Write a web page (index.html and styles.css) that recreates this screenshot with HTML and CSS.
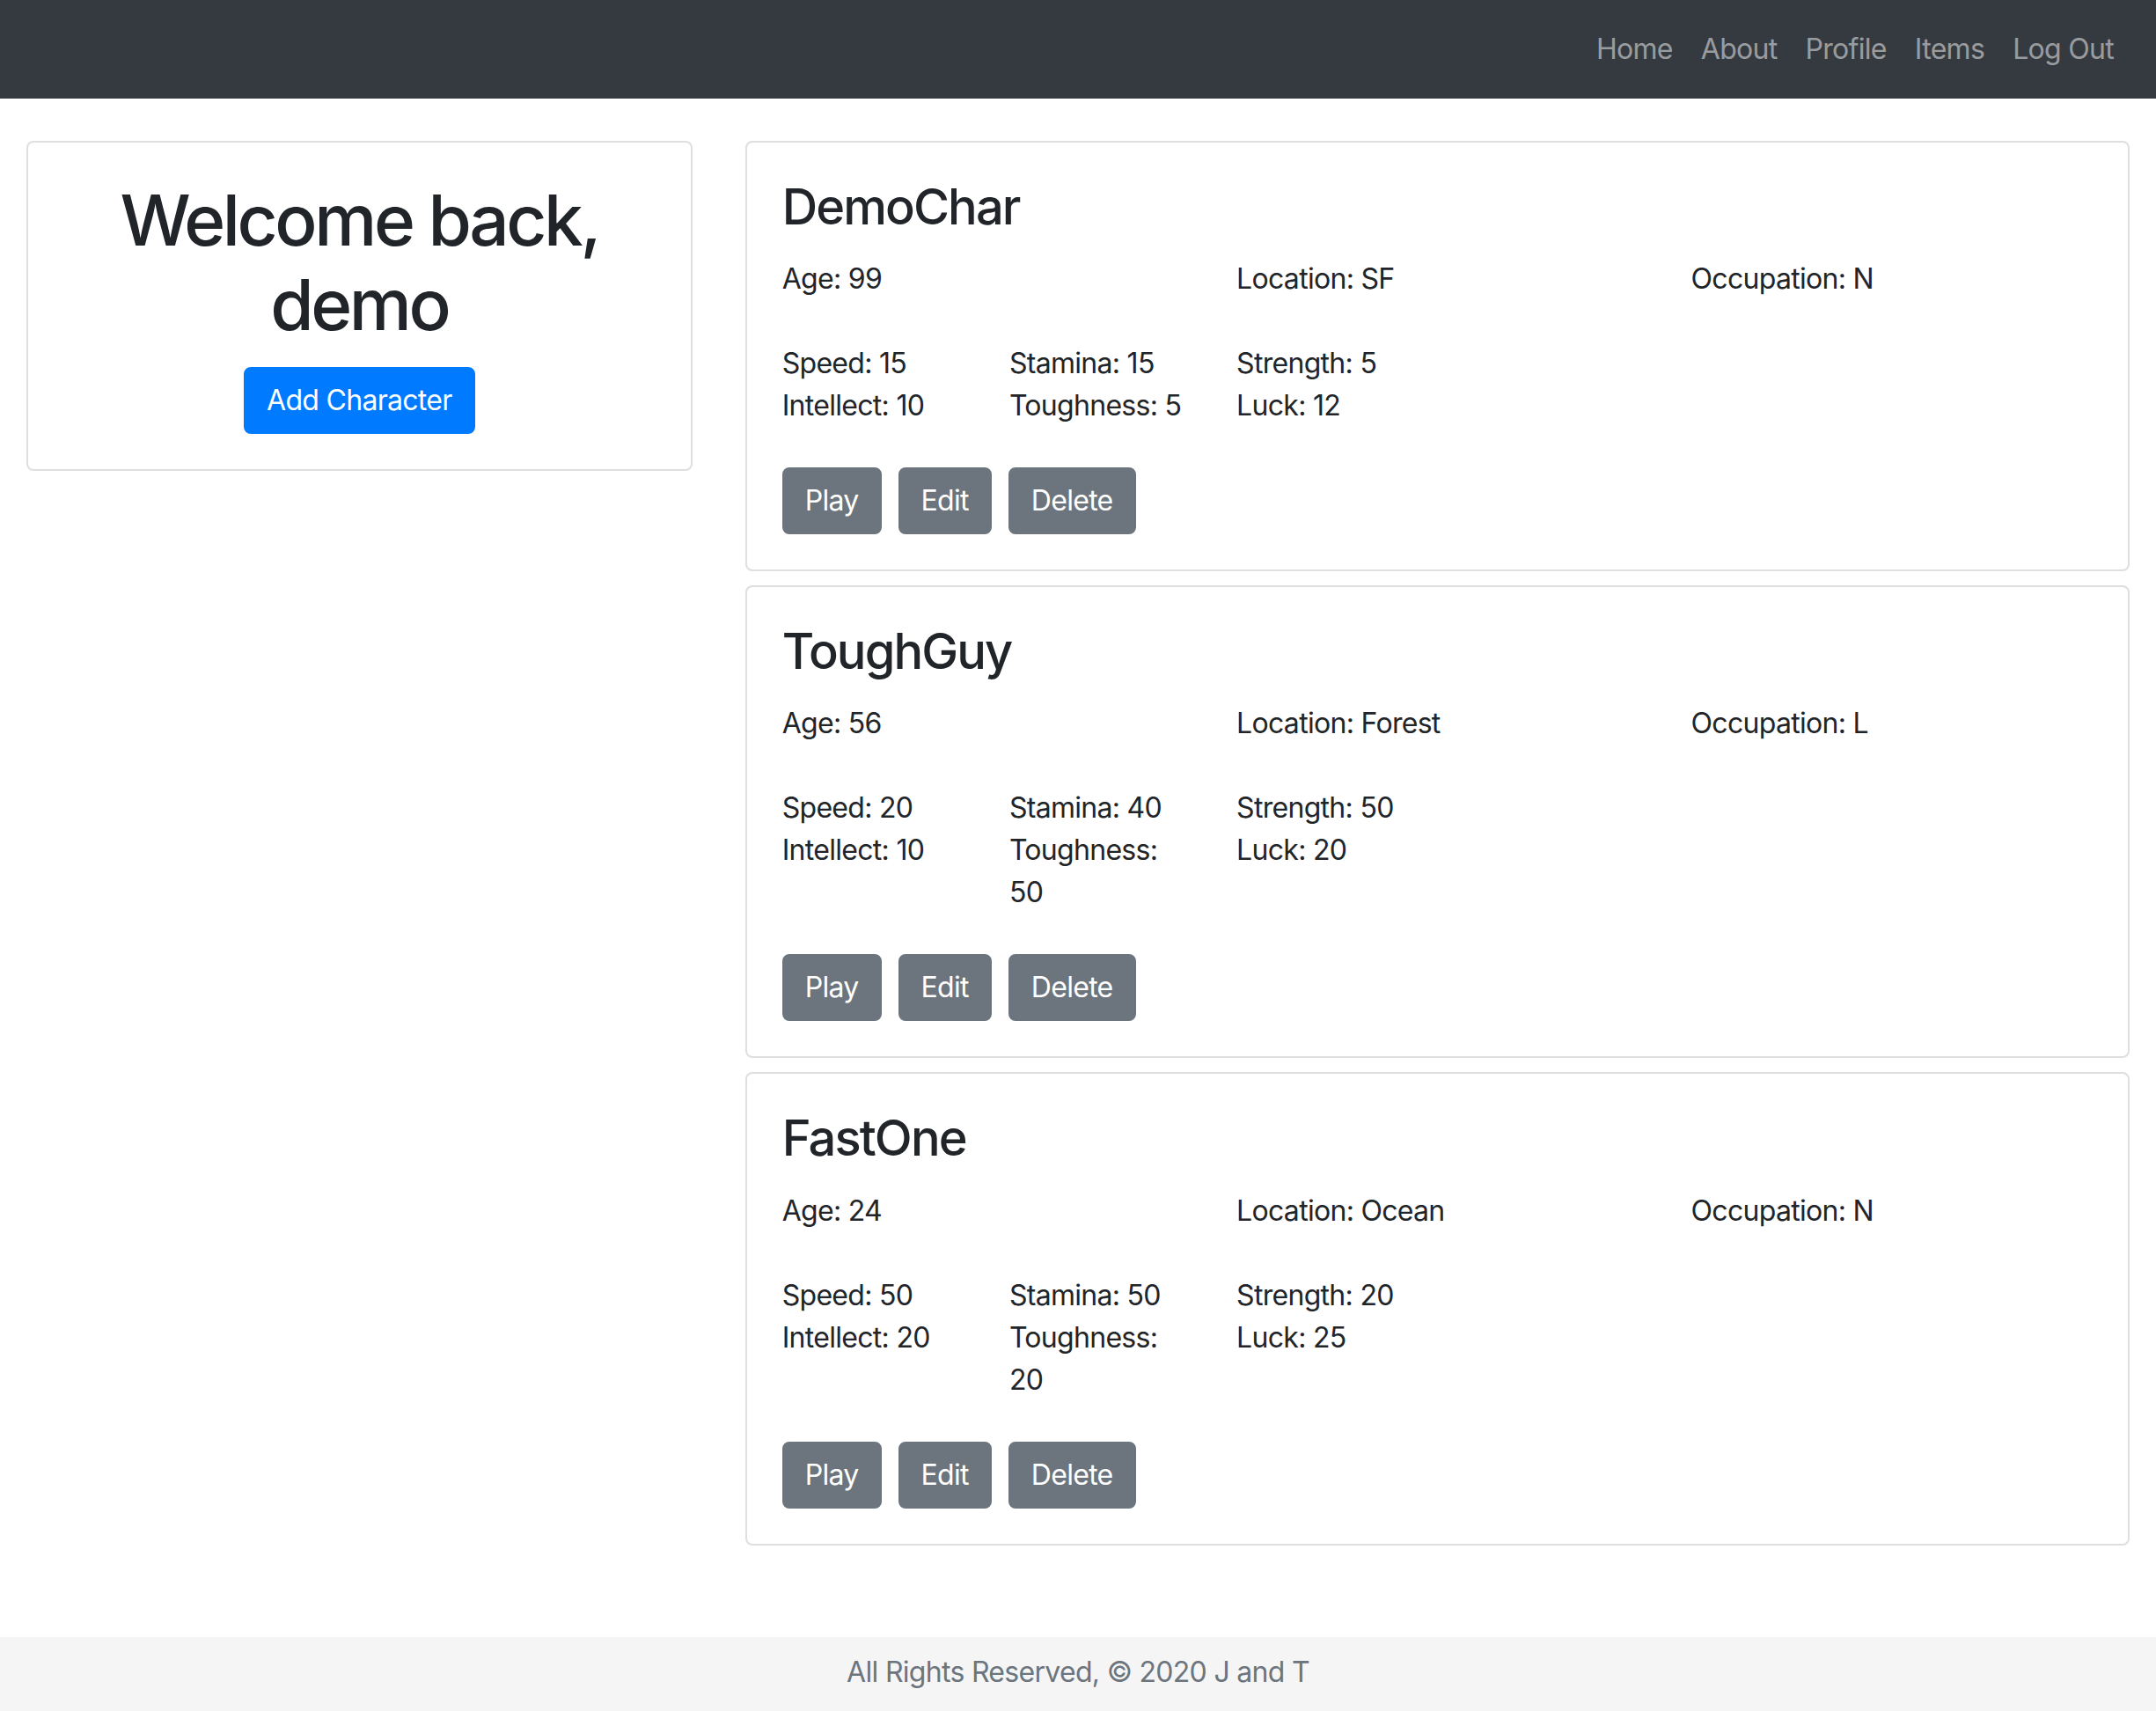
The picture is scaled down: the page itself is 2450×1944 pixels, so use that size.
FILE: index.html
```html
<!DOCTYPE html>
<html lang="en">
<head>
<meta charset="utf-8">
<title>Characters</title>
<link rel="stylesheet" href="styles.css">
</head>
<body>
<nav class="navbar">
  <ul class="nav-links">
    <li><a class="nav-link" href="#">Home</a></li>
    <li><a class="nav-link" href="#">About</a></li>
    <li><a class="nav-link" href="#">Profile</a></li>
    <li><a class="nav-link" href="#">Items</a></li>
    <li><a class="nav-link" href="#">Log Out</a></li>
  </ul>
</nav>

<main class="page">
  <div class="row">
    <aside class="col-side">
      <div class="card welcome-card">
        <h1 class="welcome-title">Welcome back, demo</h1>
        <button class="btn btn-primary">Add Character</button>
      </div>
    </aside>

    <section class="col-main">
      <div class="card char-card">
        <h3 class="char-name">DemoChar</h3>
        <div class="info-row">
          <div class="info-col">Age: 99</div>
          <div class="info-col">Location: SF</div>
          <div class="info-col">Occupation: N</div>
        </div>
        <div class="stats-row">
          <div class="stat-col"><div>Speed: 15</div><div>Intellect: 10</div></div>
          <div class="stat-col"><div>Stamina: 15</div><div>Toughness: 5</div></div>
          <div class="stat-col"><div>Strength: 5</div><div>Luck: 12</div></div>
        </div>
        <div class="actions">
          <button class="btn btn-secondary">Play</button>
          <button class="btn btn-secondary">Edit</button>
          <button class="btn btn-secondary">Delete</button>
        </div>
      </div>

      <div class="card char-card">
        <h3 class="char-name">ToughGuy</h3>
        <div class="info-row">
          <div class="info-col">Age: 56</div>
          <div class="info-col">Location: Forest</div>
          <div class="info-col">Occupation: L</div>
        </div>
        <div class="stats-row">
          <div class="stat-col"><div>Speed: 20</div><div>Intellect: 10</div></div>
          <div class="stat-col"><div>Stamina: 40</div><div>Toughness: 50</div></div>
          <div class="stat-col"><div>Strength: 50</div><div>Luck: 20</div></div>
        </div>
        <div class="actions">
          <button class="btn btn-secondary">Play</button>
          <button class="btn btn-secondary">Edit</button>
          <button class="btn btn-secondary">Delete</button>
        </div>
      </div>

      <div class="card char-card">
        <h3 class="char-name">FastOne</h3>
        <div class="info-row">
          <div class="info-col">Age: 24</div>
          <div class="info-col">Location: Ocean</div>
          <div class="info-col">Occupation: N</div>
        </div>
        <div class="stats-row">
          <div class="stat-col"><div>Speed: 50</div><div>Intellect: 20</div></div>
          <div class="stat-col"><div>Stamina: 50</div><div>Toughness: 20</div></div>
          <div class="stat-col"><div>Strength: 20</div><div>Luck: 25</div></div>
        </div>
        <div class="actions">
          <button class="btn btn-secondary">Play</button>
          <button class="btn btn-secondary">Edit</button>
          <button class="btn btn-secondary">Delete</button>
        </div>
      </div>
    </section>
  </div>
</main>

<footer class="footer">All Rights Reserved, &copy; 2020 J and T</footer>
</body>
</html>
```

FILE: styles.css
```css
* {
  box-sizing: border-box;
}

html, body {
  margin: 0;
  padding: 0;
}

body {
  font-family: Inter, "Noto Sans", "Liberation Sans", sans-serif;
  font-size: 32px;
  line-height: 48px;
  letter-spacing: -0.7px;
  color: #212529;
  background: #fff;
  min-height: 100vh;
  display: flex;
  flex-direction: column;
}

/* Navbar */
.navbar {
  background: #343a40;
  padding: 16px 32px;
  display: flex;
  justify-content: flex-end;
}

.nav-links {
  list-style: none;
  margin: 0;
  padding: 0;
  display: flex;
}

.nav-link {
  display: block;
  padding: 16px;
  color: rgba(255, 255, 255, 0.5);
  text-decoration: none;
}

/* Page layout */
.page {
  padding: 48px 30px 0;
}

.row {
  display: flex;
  margin: 0 -30px;
  align-items: flex-start;
}

.col-side {
  width: 33.3333%;
  padding: 0 30px;
}

.col-main {
  width: 66.6667%;
  padding: 0 30px;
}

/* Cards */
.card {
  border: 2px solid rgba(0, 0, 0, 0.125);
  border-radius: 8px;
  padding: 40px;
  background: #fff;
}

.welcome-card {
  text-align: center;
}

.welcome-title {
  font-size: 80px;
  line-height: 1.2;
  font-weight: 500;
  letter-spacing: -3.4px;
  margin: 0 0 23px;
}

.char-card {
  margin-bottom: 16px;
}

.char-name {
  font-size: 56px;
  line-height: 1.2;
  font-weight: 500;
  letter-spacing: -1.9px;
  margin: 0 0 24px;
}

.info-row {
  display: flex;
  margin: 0 -30px 48px;
}

.info-col {
  width: 33.3333%;
  padding: 0 30px;
}

.stats-row {
  display: flex;
  margin: 0 -30px 46px;
}

.stat-col {
  width: 16.6667%;
  padding: 0 30px;
}

/* Buttons */
.actions {
  display: flex;
  gap: 19px;
}

.btn {
  display: inline-block;
  font-family: inherit;
  font-size: 32px;
  line-height: 48px;
  font-weight: 400;
  letter-spacing: -0.7px;
  padding: 12px 24px;
  border: 2px solid transparent;
  border-radius: 8px;
  color: #fff;
  cursor: pointer;
}

.btn-primary {
  background: #007bff;
  border-color: #007bff;
}

.btn-secondary {
  background: #6c757d;
  border-color: #6c757d;
}

/* Footer */
.footer {
  margin-top: auto;
  background: #f5f5f5;
  color: #6c757d;
  text-align: center;
  padding: 16px 0 20px;
}
```
